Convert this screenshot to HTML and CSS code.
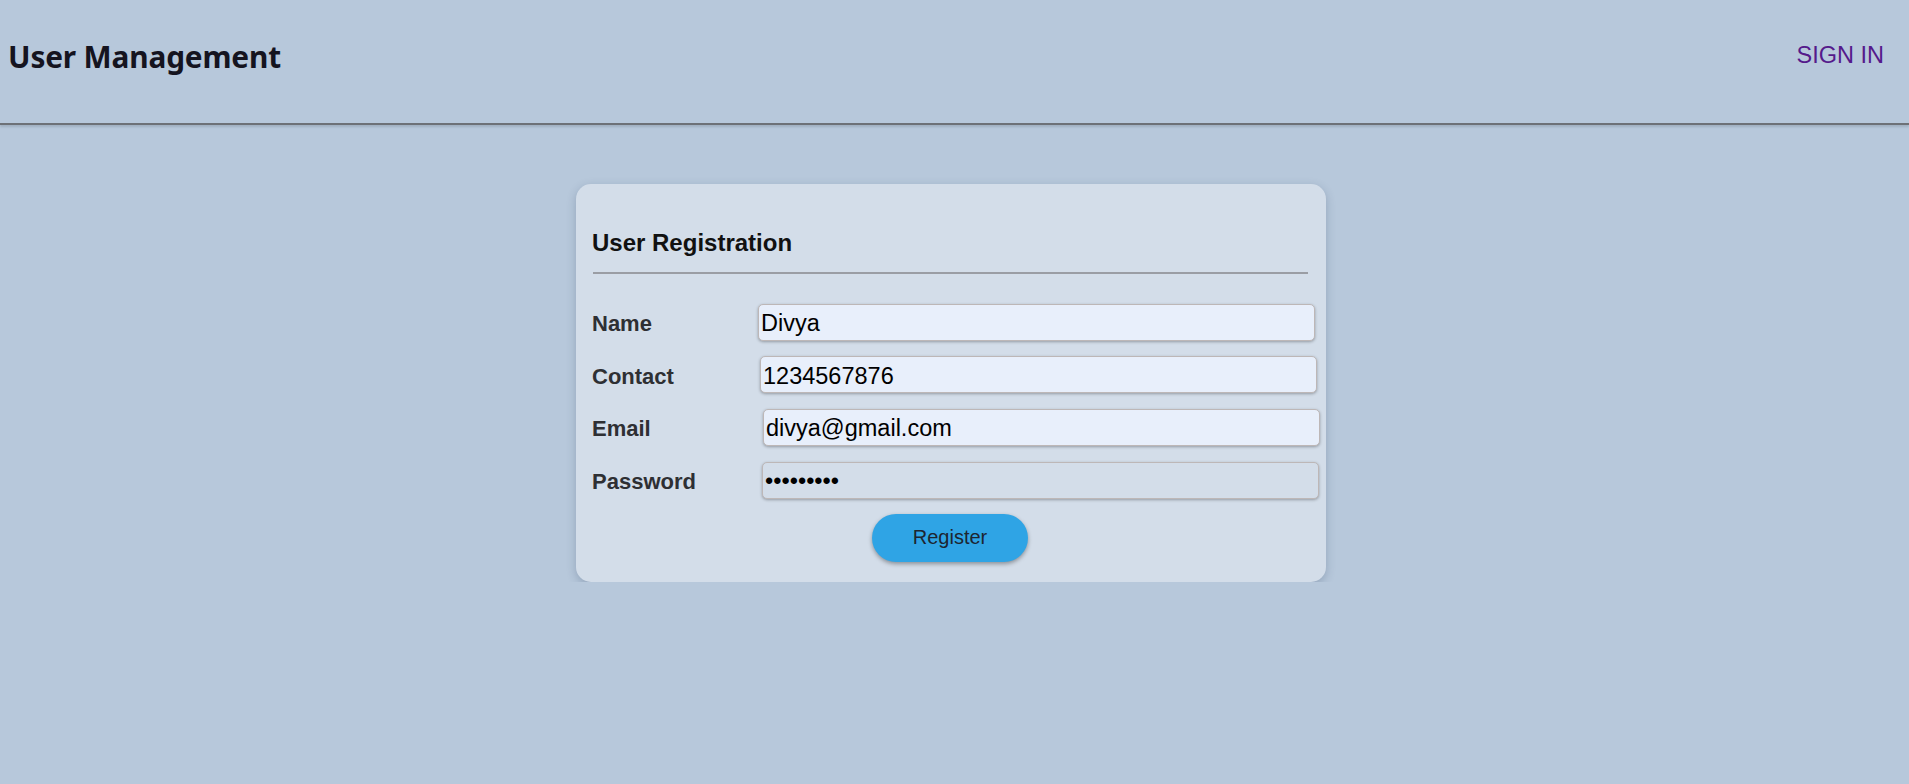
FILE: index.html
```html
<!DOCTYPE html>
<html lang="en">
<head>
<meta charset="utf-8">
<title>User Management</title>
<link rel="stylesheet" href="styles.css">
</head>
<body>
<header class="topbar">
  <h1 class="brand">User Management</h1>
  <a class="signin" href="#">SIGN IN</a>
</header>
<main class="main">
  <form class="card">
    <h2 class="card-title">User Registration</h2>
    <hr class="divider">
    <div class="field">
      <label class="field-label">Name</label>
      <input class="field-input" type="text" value="Divya">
    </div>
    <div class="field">
      <label class="field-label">Contact</label>
      <input class="field-input" type="text" value="1234567876">
    </div>
    <div class="field">
      <label class="field-label">Email</label>
      <input class="field-input" type="text" value="divya@gmail.com">
    </div>
    <div class="field">
      <label class="field-label">Password</label>
      <input class="field-input field-input--plain" type="password" value="123456789">
    </div>
    <div class="actions">
      <button class="btn" type="button">Register</button>
    </div>
  </form>
</main>
</body>
</html>
```
FILE: styles.css
```css
html, body {
  margin: 0;
  padding: 0;
  background: #b7c8db;
  min-height: 100%;
}

body {
  font-family: "Liberation Sans", Arial, sans-serif;
}

.topbar {
  display: flex;
  justify-content: space-between;
  align-items: flex-start;
  padding: 0 25px 0 8px;
  border-bottom: 2px solid #6d7177;
  box-shadow: 0 2px 2px rgba(0, 0, 0, 0.12);
  box-sizing: border-box;
  height: 125px;
}

.brand {
  margin: 36px 0 0 0;
  font-family: "Noto Sans", sans-serif;
  font-weight: 700;
  font-size: 29.8px;
  line-height: 41px;
  color: #15141f;
  letter-spacing: -0.15px;
}

.signin {
  margin-top: 42px;
  font-family: "Liberation Sans", Arial, sans-serif;
  font-size: 23.5px;
  line-height: 27px;
  color: #551a8b;
  text-decoration: none;
}

.main {
  display: flex;
  justify-content: center;
  padding: 59px 7px 0 0;
}

.card {
  width: 750px;
  box-sizing: border-box;
  padding: 45px 18px 20px 16px;
  background: #d3dde9;
  border-radius: 15px;
  box-shadow: 0 3px 10px rgba(40, 60, 90, 0.25);
}

.card-title {
  margin: 0;
  font-size: 24px;
  line-height: 27px;
  font-weight: 700;
  color: #111;
}

.divider {
  margin: 16px 0 0 1px;
  border: 0;
  height: 2px;
  background: #9a9da4;
}

.field {
  display: flex;
  align-items: center;
  margin-top: 15.7px;
}

.field:first-of-type {
  margin-top: 29.6px;
}

.field-label {
  width: 166px;
  flex: none;
  padding-top: 4px;
  font-size: 22px;
  font-weight: 700;
  color: #2e2f33;
}

.field:nth-of-type(2) .field-label { width: 168px; }
.field:nth-of-type(3) .field-label { width: 171px; }
.field:nth-of-type(4) .field-label { width: 170px; }

.field-input {
  flex: none;
  width: 557px;
  height: 37px;
  box-sizing: border-box;
  margin: 0;
  padding: 3px 2px 0 2px;
  font-family: "Liberation Sans", Arial, sans-serif;
  font-size: 23.5px;
  color: #000;
  background: #e8effb;
  border: 1px solid #bdb7b7;
  border-radius: 5px;
  box-shadow: 0 1px 3px rgba(0, 0, 0, 0.3);
  outline: none;
}

.field-input--plain {
  background: #d3dde9;
}

.actions {
  display: flex;
  justify-content: center;
  margin-top: 15px;
}

.btn {
  width: 156px;
  height: 48px;
  border: 0;
  border-radius: 24px;
  background: #2fa4e5;
  color: #1d2530;
  font-family: "Liberation Sans", Arial, sans-serif;
  font-size: 20px;
  box-shadow: 0 2px 4px rgba(0, 0, 0, 0.35);
  cursor: pointer;
}
```
